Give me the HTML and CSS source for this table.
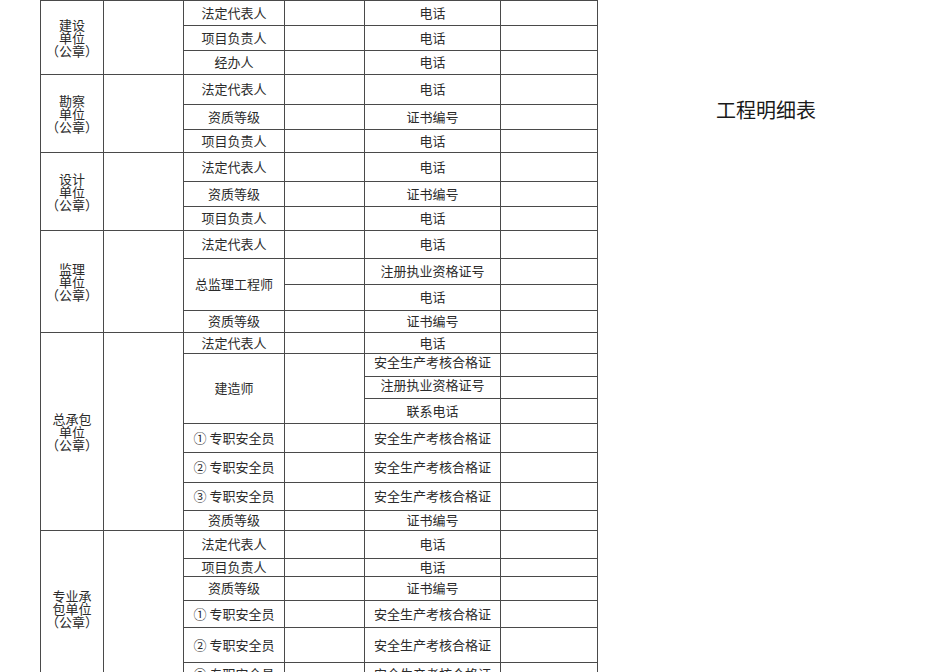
FILE: index.html
```html
<!DOCTYPE html>
<html lang="zh-CN">
<head>
<meta charset="utf-8">
<title>工程明细表</title>
<link rel="stylesheet" href="styles.css">
</head>
<body>
<div class="page">
  <table class="sheet">
    <colgroup>
      <col class="c1"><col class="c2"><col class="c3"><col class="c4"><col class="c5"><col class="c6">
    </colgroup>
    <tbody>
      <tr class="r25"><td class="unit" rowspan="3">建设<br>单位<br>（公章）</td><td rowspan="3"></td><td>法定代表人</td><td></td><td>电话</td><td></td></tr>
      <tr class="r25"><td>项目负责人</td><td></td><td>电话</td><td></td></tr>
      <tr class="r24"><td>经办人</td><td></td><td>电话</td><td></td></tr>

      <tr class="r30"><td class="unit" rowspan="3">勘察<br>单位<br>（公章）</td><td rowspan="3"></td><td>法定代表人</td><td></td><td>电话</td><td></td></tr>
      <tr class="r25"><td>资质等级</td><td></td><td>证书编号</td><td></td></tr>
      <tr class="r23"><td>项目负责人</td><td></td><td>电话</td><td></td></tr>

      <tr class="r29"><td class="unit" rowspan="3">设计<br>单位<br>（公章）</td><td rowspan="3"></td><td>法定代表人</td><td></td><td>电话</td><td></td></tr>
      <tr class="r25"><td>资质等级</td><td></td><td>证书编号</td><td></td></tr>
      <tr class="r24"><td>项目负责人</td><td></td><td>电话</td><td></td></tr>

      <tr class="r28"><td class="unit" rowspan="4">监理<br>单位<br>（公章）</td><td rowspan="4"></td><td>法定代表人</td><td></td><td>电话</td><td></td></tr>
      <tr class="r26"><td rowspan="2">总监理工程师</td><td></td><td>注册执业资格证号</td><td></td></tr>
      <tr class="r26"><td></td><td>电话</td><td></td></tr>
      <tr class="r22"><td>资质等级</td><td></td><td>证书编号</td><td></td></tr>

      <tr class="r21"><td class="unit" rowspan="8">总承包<br>单位<br>（公章）</td><td rowspan="8"></td><td>法定代表人</td><td></td><td>电话</td><td></td></tr>
      <tr class="r23"><td rowspan="3">建造师</td><td rowspan="3"></td><td class="hi">安全生产考核合格证</td><td></td></tr>
      <tr class="r22"><td class="hi">注册执业资格证号</td><td></td></tr>
      <tr class="r25"><td>联系电话</td><td></td></tr>
      <tr class="r29"><td>① 专职安全员</td><td></td><td>安全生产考核合格证</td><td></td></tr>
      <tr class="r30"><td>② 专职安全员</td><td></td><td>安全生产考核合格证</td><td></td></tr>
      <tr class="r28"><td>③ 专职安全员</td><td></td><td>安全生产考核合格证</td><td></td></tr>
      <tr class="r20"><td>资质等级</td><td></td><td>证书编号</td><td></td></tr>

      <tr class="r28"><td class="unit" rowspan="6">专业承<br>包单位<br>（公章）</td><td rowspan="6"></td><td>法定代表人</td><td></td><td>电话</td><td></td></tr>
      <tr class="r18"><td>项目负责人</td><td></td><td>电话</td><td></td></tr>
      <tr class="r24"><td>资质等级</td><td></td><td>证书编号</td><td></td></tr>
      <tr class="r27"><td>① 专职安全员</td><td></td><td>安全生产考核合格证</td><td></td></tr>
      <tr class="r35"><td>② 专职安全员</td><td></td><td>安全生产考核合格证</td><td></td></tr>
      <tr class="r24"><td>③ 专职安全员</td><td></td><td>安全生产考核合格证</td><td></td></tr>
    </tbody>
  </table>
  <h1 class="title">工程明细表</h1>
</div>
</body>
</html>
```

FILE: styles.css
```css
html, body {
  margin: 0;
  padding: 0;
  background: #ffffff;
  overflow: hidden;
}

.page {
  display: flex;
  align-items: flex-start;
  padding-left: 40px;
  font-family: "Noto Sans CJK SC", "Noto Sans", sans-serif;
  color: #2b2b2b;
}

.sheet {
  border-collapse: collapse;
  table-layout: fixed;
  width: 558px;
  font-size: 13px;
  line-height: 13px;
}

.c1 { width: 63px; }
.c2 { width: 80px; }
.c3 { width: 101px; }
.c4 { width: 80px; }
.c5 { width: 136px; }
.c6 { width: 97px; }

.sheet td {
  border: 1px solid #4a4a4a;
  padding: 0 0 2px 0;
  text-align: center;
  vertical-align: middle;
  white-space: nowrap;
  overflow: hidden;
}

.sheet td.hi {
  vertical-align: top;
  padding: 1px 0 0 0;
}

.sheet td.unit {
  line-height: 13px;
  padding: 0;
}

.r18 { height: 18px; }
.r20 { height: 20px; }
.r21 { height: 21px; }
.r22 { height: 22px; }
.r23 { height: 23px; }
.r24 { height: 24px; }
.r25 { height: 25px; }
.r26 { height: 26px; }
.r27 { height: 27px; }
.r28 { height: 28px; }
.r29 { height: 29px; }
.r30 { height: 30px; }
.r35 { height: 35px; }

.title {
  margin: 100px 0 0 118px;
  font-size: 20px;
  line-height: 20px;
  font-weight: normal;
  color: #1a1a1a;
}
```
